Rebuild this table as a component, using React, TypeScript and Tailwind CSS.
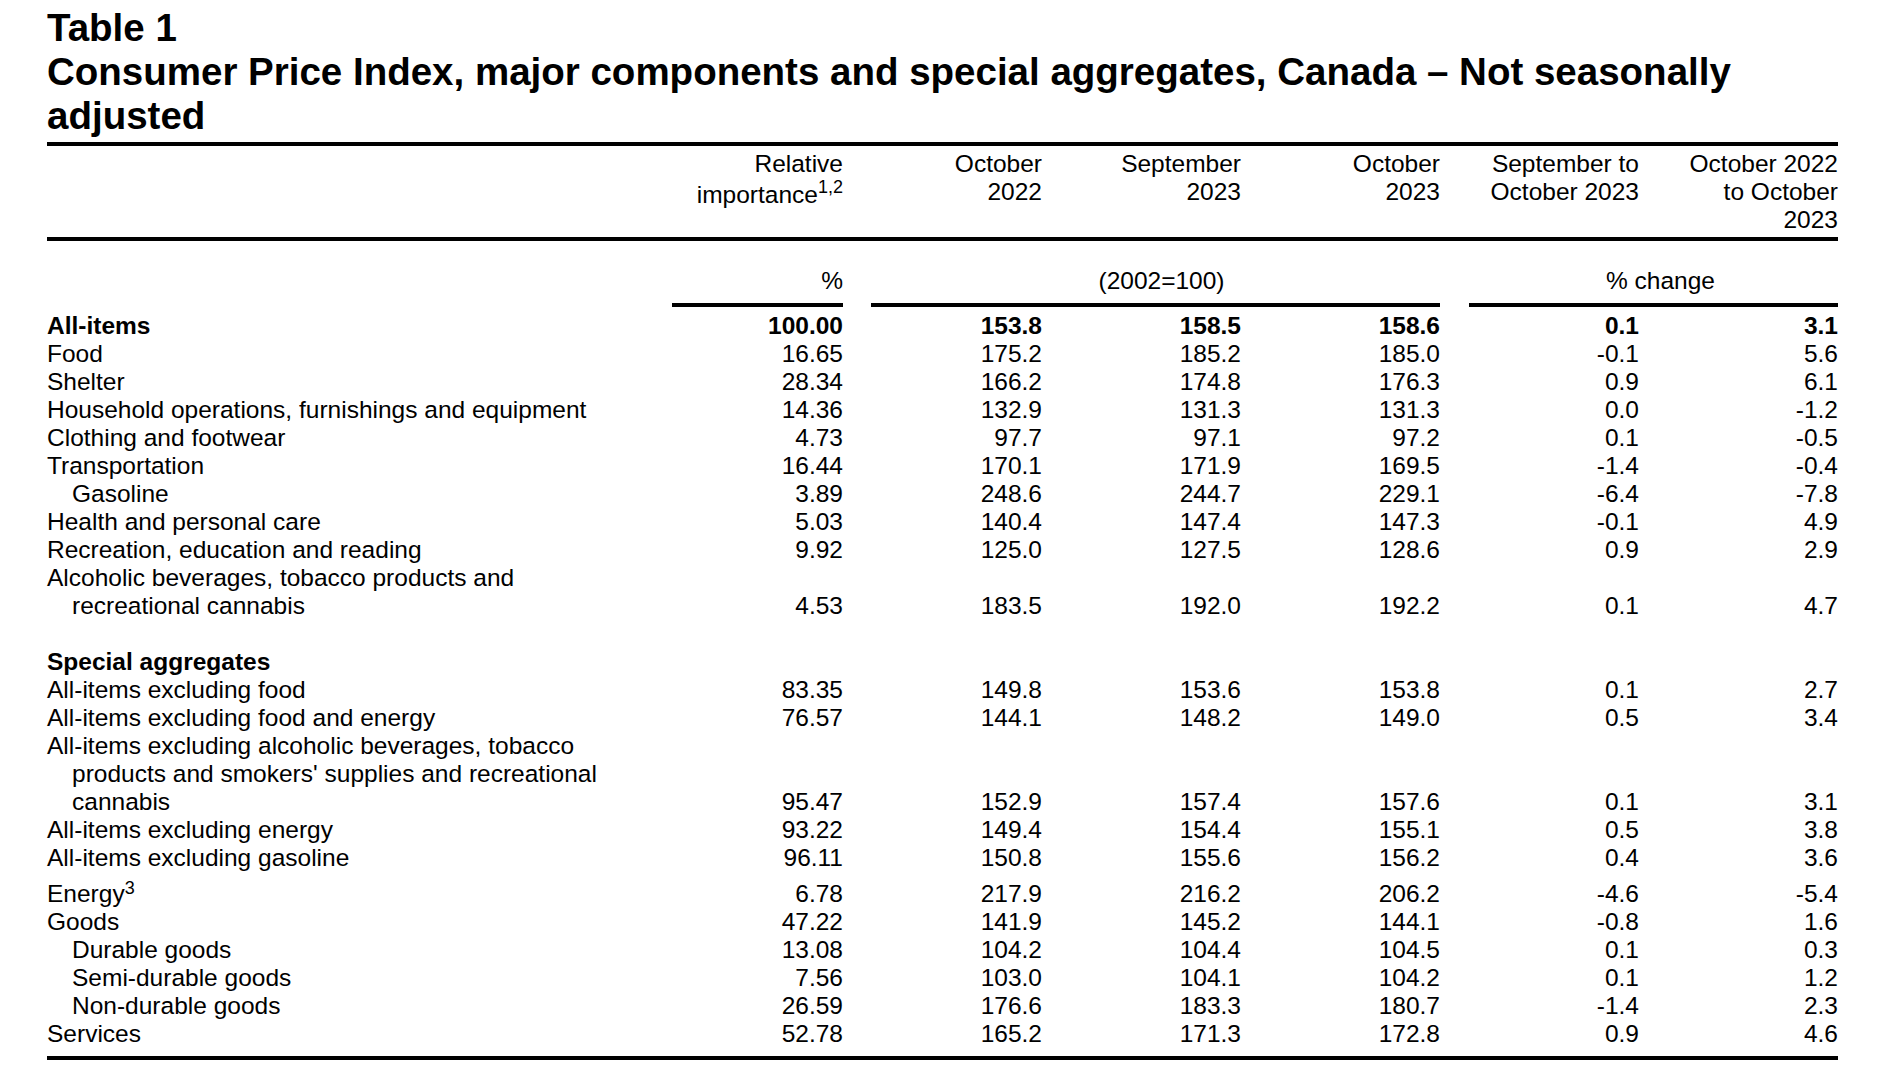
type Row = {
  label: string[];
  values?: string[];
  bold?: boolean;
  indent?: boolean;
  sup?: string;
  blank?: boolean;
};

const rows: Row[] = [
  { label: ["All-items"], bold: true, values: ["100.00", "153.8", "158.5", "158.6", "0.1", "3.1"] },
  { label: ["Food"], values: ["16.65", "175.2", "185.2", "185.0", "-0.1", "5.6"] },
  { label: ["Shelter"], values: ["28.34", "166.2", "174.8", "176.3", "0.9", "6.1"] },
  {
    label: ["Household operations, furnishings and equipment"],
    values: ["14.36", "132.9", "131.3", "131.3", "0.0", "-1.2"],
  },
  { label: ["Clothing and footwear"], values: ["4.73", "97.7", "97.1", "97.2", "0.1", "-0.5"] },
  { label: ["Transportation"], values: ["16.44", "170.1", "171.9", "169.5", "-1.4", "-0.4"] },
  { label: ["Gasoline"], indent: true, values: ["3.89", "248.6", "244.7", "229.1", "-6.4", "-7.8"] },
  { label: ["Health and personal care"], values: ["5.03", "140.4", "147.4", "147.3", "-0.1", "4.9"] },
  { label: ["Recreation, education and reading"], values: ["9.92", "125.0", "127.5", "128.6", "0.9", "2.9"] },
  {
    label: ["Alcoholic beverages, tobacco products and", "recreational cannabis"],
    values: ["4.53", "183.5", "192.0", "192.2", "0.1", "4.7"],
  },
  { label: [], blank: true },
  { label: ["Special aggregates"], bold: true },
  { label: ["All-items excluding food"], values: ["83.35", "149.8", "153.6", "153.8", "0.1", "2.7"] },
  { label: ["All-items excluding food and energy"], values: ["76.57", "144.1", "148.2", "149.0", "0.5", "3.4"] },
  {
    label: [
      "All-items excluding alcoholic beverages, tobacco",
      "products and smokers' supplies and recreational",
      "cannabis",
    ],
    values: ["95.47", "152.9", "157.4", "157.6", "0.1", "3.1"],
  },
  { label: ["All-items excluding energy"], values: ["93.22", "149.4", "154.4", "155.1", "0.5", "3.8"] },
  { label: ["All-items excluding gasoline"], values: ["96.11", "150.8", "155.6", "156.2", "0.4", "3.6"] },
  { label: ["Energy"], sup: "3", values: ["6.78", "217.9", "216.2", "206.2", "-4.6", "-5.4"] },
  { label: ["Goods"], values: ["47.22", "141.9", "145.2", "144.1", "-0.8", "1.6"] },
  { label: ["Durable goods"], indent: true, values: ["13.08", "104.2", "104.4", "104.5", "0.1", "0.3"] },
  { label: ["Semi-durable goods"], indent: true, values: ["7.56", "103.0", "104.1", "104.2", "0.1", "1.2"] },
  { label: ["Non-durable goods"], indent: true, values: ["26.59", "176.6", "183.3", "180.7", "-1.4", "2.3"] },
  { label: ["Services"], values: ["52.78", "165.2", "171.3", "172.8", "0.9", "4.6"] },
];

const headers: string[][] = [
  ["October", "2022"],
  ["September", "2023"],
  ["October", "2023"],
  ["September to", "October 2023"],
  ["October 2022", "to October", "2023"],
];

function DataRow({ row }: { row: Row }) {
  if (row.blank) return <div className="h-[28px]" />;

  return (
    <div
      className={`grid grid-cols-[597px_repeat(6,199px)] items-end ${row.sup ? "pt-[7px]" : ""} ${
        row.bold ? "font-bold" : ""
      }`}
    >
      <div>
        {row.label.map((line, i) => (
          <div key={i} className={i > 0 || row.indent ? "pl-[25px]" : ""}>
            {line}
            {row.sup && (
              <span className="align-[8px] text-[18px] leading-none">{row.sup}</span>
            )}
          </div>
        ))}
      </div>
      {row.values?.map((v, i) => (
        <div key={i} className="text-right">
          {v}
        </div>
      ))}
    </div>
  );
}

export default function App() {
  return (
    <div className="min-h-screen bg-white px-[47px] pt-[6px] font-['Liberation_Sans',Arial,sans-serif] text-black">
      <h1 className="whitespace-nowrap text-[38.5px] font-bold leading-[44px]">
        Table 1
        <br />
        Consumer Price Index, major components and special aggregates, Canada – Not seasonally
        <br />
        adjusted
      </h1>

      <div className="mt-[4px] w-[1791px] border-t-4 border-b-4 border-black pb-[8px] text-[24.5px] leading-[28px]">
        {/* column headings */}
        <div className="grid grid-cols-[597px_repeat(6,199px)] border-b-4 border-black pt-[4px] pb-[3px]">
          <div />
          <div className="text-right">
            Relative
            <br />
            importance
            <span className="align-[10px] text-[18px] leading-none">1,2</span>
          </div>
          {headers.map((lines, i) => (
            <div key={i} className="text-right">
              {lines.map((l, j) => (
                <div key={j}>{l}</div>
              ))}
            </div>
          ))}
        </div>

        {/* units */}
        <div className="mt-[26px] mb-[5px] grid grid-cols-[597px_repeat(6,199px)]">
          <div />
          <div className="pl-[28px]">
            <div className="border-b-4 border-black pb-[8px] text-right">%</div>
          </div>
          <div className="col-span-3 pl-[28px]">
            <div className="border-b-4 border-black pb-[8px] pl-[12px] text-center">(2002=100)</div>
          </div>
          <div className="col-span-2 pl-[29px]">
            <div className="border-b-4 border-black pb-[8px] pl-[14px] text-center">% change</div>
          </div>
        </div>

        {rows.map((row, i) => (
          <DataRow key={i} row={row} />
        ))}
      </div>
    </div>
  );
}
